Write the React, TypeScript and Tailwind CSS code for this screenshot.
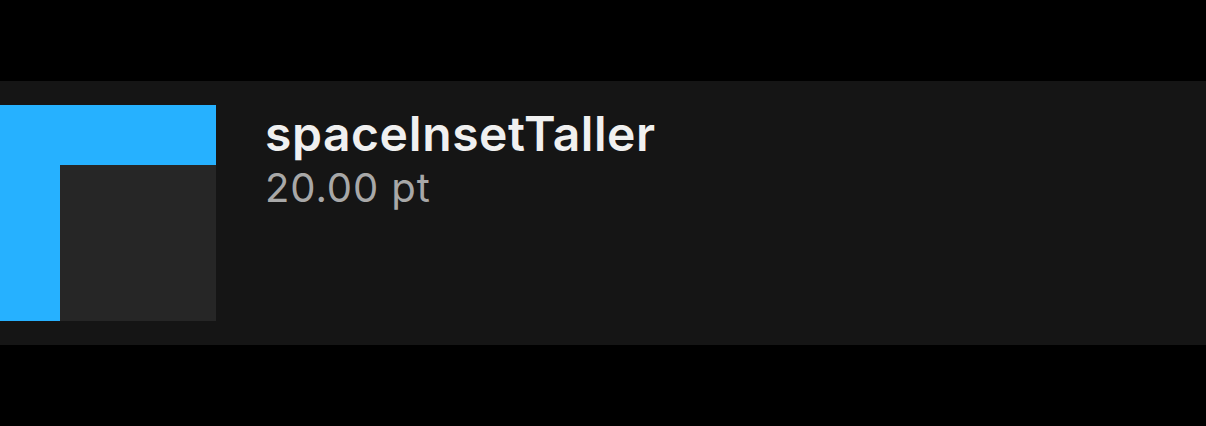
export default function App() {
  return (
    <div className="w-[1206px] h-[426px] bg-black pt-[81px]" style={{ fontFamily: "Inter, 'Noto Sans', sans-serif" }}>
      <div className="flex h-[264px] items-start bg-[#151515] py-6">
        <div className="flex h-[216px] w-[216px] flex-col bg-[#26b1ff]">
          <div className="ml-[60px] mt-[60px] h-[156px] w-[156px] bg-[#262626]" />
        </div>
        <div className="ml-[49px] flex flex-col pt-[3px]">
          <span className="text-[48px] font-semibold leading-[52px] tracking-[0.55px] text-[#f0f0f0]">spaceInsetTaller</span>
          <span className="text-[40px] leading-[56px] tracking-[0.9px] text-[#a8a8a8]">20.00 pt</span>
        </div>
      </div>
    </div>
  );
}
